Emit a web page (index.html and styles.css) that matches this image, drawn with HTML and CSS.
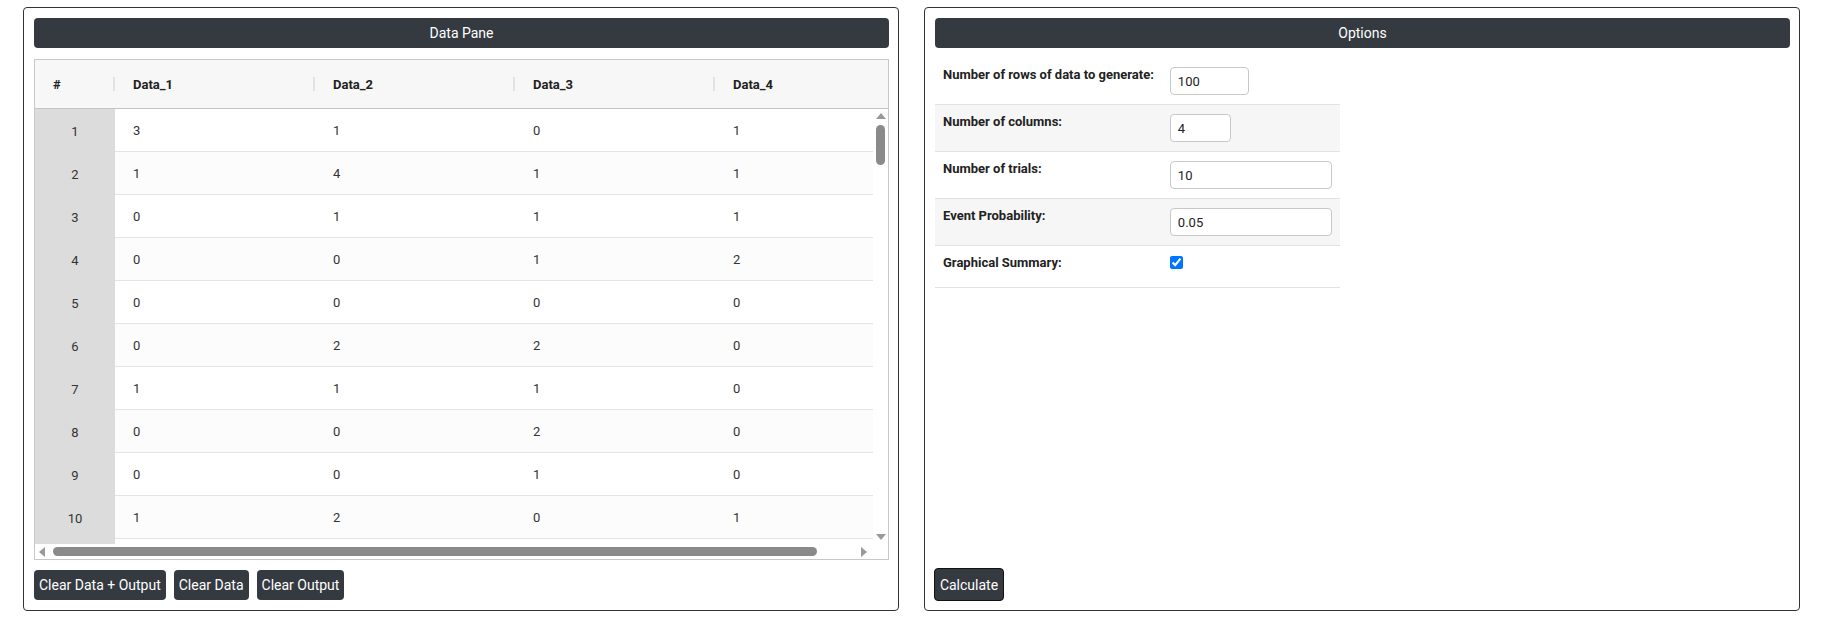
FILE: index.html
```html
<!DOCTYPE html>
<html lang="en">
<head>
    <meta charset="UTF-8">
    <meta name="viewport" content="width=device-width, initial-scale=1.0">
    <title>Binomial Data Generator</title>
    <link rel="stylesheet" href="styles.css">
</head>
<body>
    <div class="panes">
        <div class="pane">
            <div class="pane-title">Data Pane</div>
            <div class="grid">
                <div class="grid-head">
                    <div class="hcell col-num">#<span class="sep"></span></div>
                    <div class="hcell col-data">Data_1<span class="sep"></span></div>
                    <div class="hcell col-data">Data_2<span class="sep"></span></div>
                    <div class="hcell col-data">Data_3<span class="sep"></span></div>
                    <div class="hcell col-data">Data_4<span class="sep"></span></div>
                </div>
                <div class="grid-body">
                    <div class="rows">
                        <div class="row"><div class="num">1</div><div class="cell">3</div><div class="cell">1</div><div class="cell">0</div><div class="cell">1</div></div>
                        <div class="row alt"><div class="num">2</div><div class="cell">1</div><div class="cell">4</div><div class="cell">1</div><div class="cell">1</div></div>
                        <div class="row"><div class="num">3</div><div class="cell">0</div><div class="cell">1</div><div class="cell">1</div><div class="cell">1</div></div>
                        <div class="row alt"><div class="num">4</div><div class="cell">0</div><div class="cell">0</div><div class="cell">1</div><div class="cell">2</div></div>
                        <div class="row"><div class="num">5</div><div class="cell">0</div><div class="cell">0</div><div class="cell">0</div><div class="cell">0</div></div>
                        <div class="row alt"><div class="num">6</div><div class="cell">0</div><div class="cell">2</div><div class="cell">2</div><div class="cell">0</div></div>
                        <div class="row"><div class="num">7</div><div class="cell">1</div><div class="cell">1</div><div class="cell">1</div><div class="cell">0</div></div>
                        <div class="row alt"><div class="num">8</div><div class="cell">0</div><div class="cell">0</div><div class="cell">2</div><div class="cell">0</div></div>
                        <div class="row"><div class="num">9</div><div class="cell">0</div><div class="cell">0</div><div class="cell">1</div><div class="cell">0</div></div>
                        <div class="row alt"><div class="num">10</div><div class="cell">1</div><div class="cell">2</div><div class="cell">0</div><div class="cell">1</div></div>
                        <div class="row"><div class="num"></div><div class="cell"></div><div class="cell"></div><div class="cell"></div><div class="cell"></div></div>
                    </div>
                    <div class="vscroll">
                        <span class="arrow up"></span>
                        <span class="vthumb"></span>
                        <span class="arrow down"></span>
                    </div>
                </div>
                <div class="hscroll">
                    <span class="arrow left"></span>
                    <span class="hthumb"></span>
                    <span class="arrow right"></span>
                </div>
            </div>
            <div class="actions">
                <button class="btn">Clear Data + Output</button>
                <button class="btn">Clear Data</button>
                <button class="btn">Clear Output</button>
            </div>
        </div>

        <div class="pane">
            <div class="pane-title">Options</div>
            <table class="options">
                <tr>
                    <td class="opt-label">Number of rows of data to generate:</td>
                    <td><input type="text" class="in-rows" value="100"></td>
                </tr>
                <tr class="striped">
                    <td class="opt-label">Number of columns:</td>
                    <td><input type="text" class="in-cols" value="4"></td>
                </tr>
                <tr>
                    <td class="opt-label">Number of trials:</td>
                    <td><input type="text" class="in-wide" value="10"></td>
                </tr>
                <tr class="striped">
                    <td class="opt-label">Event Probability:</td>
                    <td><input type="text" class="in-wide" value="0.05"></td>
                </tr>
                <tr class="opt-last">
                    <td class="opt-label">Graphical Summary:</td>
                    <td><input type="checkbox" class="check" checked></td>
                </tr>
            </table>
            <div class="actions bottom">
                <button class="btn btn-calc">Calculate</button>
            </div>
        </div>
    </div>
</body>
</html>
```

FILE: styles.css
```css
body {
    font-family: Roboto, "Liberation Sans", Arial, sans-serif;
    margin: 0;
    padding: 7px 0 0 23px;
    color: #333;
    background: #fff;
}
.panes {
    display: flex;
    gap: 25px;
}
.pane {
    box-sizing: border-box;
    width: 876px;
    height: 604px;
    border: 1px solid #333;
    border-radius: 4px;
    padding: 10px 9px 10px 10px;
    display: flex;
    flex-direction: column;
}
.pane-title {
    height: 30px;
    line-height: 30px;
    background-color: #343a40;
    color: #fff;
    text-align: center;
    font-size: 14px;
    border-radius: 4px;
    margin-bottom: 11px;
}

/* data grid */
.grid {
    border: 1px solid #c8c8c8;
    overflow: hidden;
}
.grid-head {
    display: flex;
    height: 48px;
    background: #f7f7f7;
    border-bottom: 1px solid #c4c4c4;
    overflow: hidden;
    font-size: 13px;
    font-weight: bold;
    color: #222;
}
.hcell {
    position: relative;
    flex: none;
    box-sizing: border-box;
    padding-left: 18px;
    line-height: 50px;
}
.col-num {
    width: 80px;
}
.col-data {
    width: 200px;
}
.sep {
    position: absolute;
    right: 0;
    top: 17px;
    width: 2px;
    height: 14px;
    background: #e2e2e2;
}
.grid-body {
    display: flex;
    height: 435px;
}
.rows {
    flex: 1;
    overflow: hidden;
    font-size: 13px;
}
.row {
    display: flex;
    height: 43px;
}
.num {
    flex: none;
    box-sizing: border-box;
    width: 80px;
    padding-top: 2px;
    background: #dcdcdc;
    text-align: center;
    line-height: 41px;
}
.cell {
    flex: none;
    box-sizing: border-box;
    width: 200px;
    padding: 2px 0 0 18px;
    line-height: 40px;
    border-bottom: 1px solid #e4e4e4;
}
.row.alt .cell {
    background: #fcfcfc;
}
.row .cell:last-child {
    width: 158px;
}

/* scrollbars */
.vscroll {
    flex: none;
    width: 15px;
    display: flex;
    flex-direction: column;
    align-items: center;
    padding: 4px 0 4px;
    box-sizing: border-box;
}
.vthumb {
    width: 9px;
    height: 40px;
    margin-top: 6px;
    border-radius: 5px;
    background: #8a8a8a;
}
.hscroll {
    display: flex;
    align-items: center;
    height: 15px;
    padding: 0 21px 0 4px;
}
.hthumb {
    height: 9px;
    width: 764px;
    margin: 0 auto 0 8px;
    border-radius: 5px;
    background: #8a8a8a;
}
.arrow {
    width: 0;
    height: 0;
    border: 5px solid transparent;
}
.arrow.up {
    border-top: 0;
    border-bottom: 6px solid #999;
}
.arrow.down {
    margin-top: auto;
    border-bottom: 0;
    border-top: 6px solid #999;
}
.arrow.left {
    border-left: 0;
    border-right: 6px solid #999;
}
.arrow.right {
    border-right: 0;
    border-left: 6px solid #999;
}

/* buttons */
.actions {
    display: flex;
    gap: 8px;
    margin-top: 10px;
}
.actions.bottom {
    margin-top: auto;
}
.btn {
    height: 30px;
    padding: 0 5px;
    background-color: #343a40;
    color: #fff;
    border: none;
    border-radius: 4px;
    font-family: Roboto, "Liberation Sans", Arial, sans-serif;
    font-size: 14px;
    cursor: pointer;
}
.btn:hover {
    background-color: #23272b;
}
.btn-calc {
    height: 33px;
    width: 70px;
    margin-left: -1px;
    margin-bottom: -1px;
    border: 1px solid #111;
    padding: 0;
}

/* options table */
.options {
    width: 404px;
    border-collapse: collapse;
    font-size: 13px;
    margin-top: -1px;
}
.options td {
    padding: 9px 8px;
    vertical-align: top;
    line-height: 16px;
}
.options tr + tr td {
    border-top: 1px solid #e2e2e2;
}
.options tr.striped td {
    background: #f6f6f6;
}
.opt-label {
    width: 210px;
    font-weight: bold;
    color: #222;
    white-space: nowrap;
}
.opt-last td {
    padding-bottom: 14px;
    border-bottom: 1px solid #e2e2e2;
}
.options input[type="text"] {
    display: block;
    box-sizing: border-box;
    height: 28px;
    padding: 0 7px;
    border: 1px solid #c8c8c8;
    border-radius: 4px;
    font-family: Roboto, "Liberation Sans", Arial, sans-serif;
    font-size: 13px;
    color: #222;
}
.in-rows {
    width: 79px;
}
.in-cols {
    width: 61px;
}
.in-wide {
    width: 162px;
}
.check {
    width: 13px;
    height: 13px;
    margin: 1px 0 0;
}
```
